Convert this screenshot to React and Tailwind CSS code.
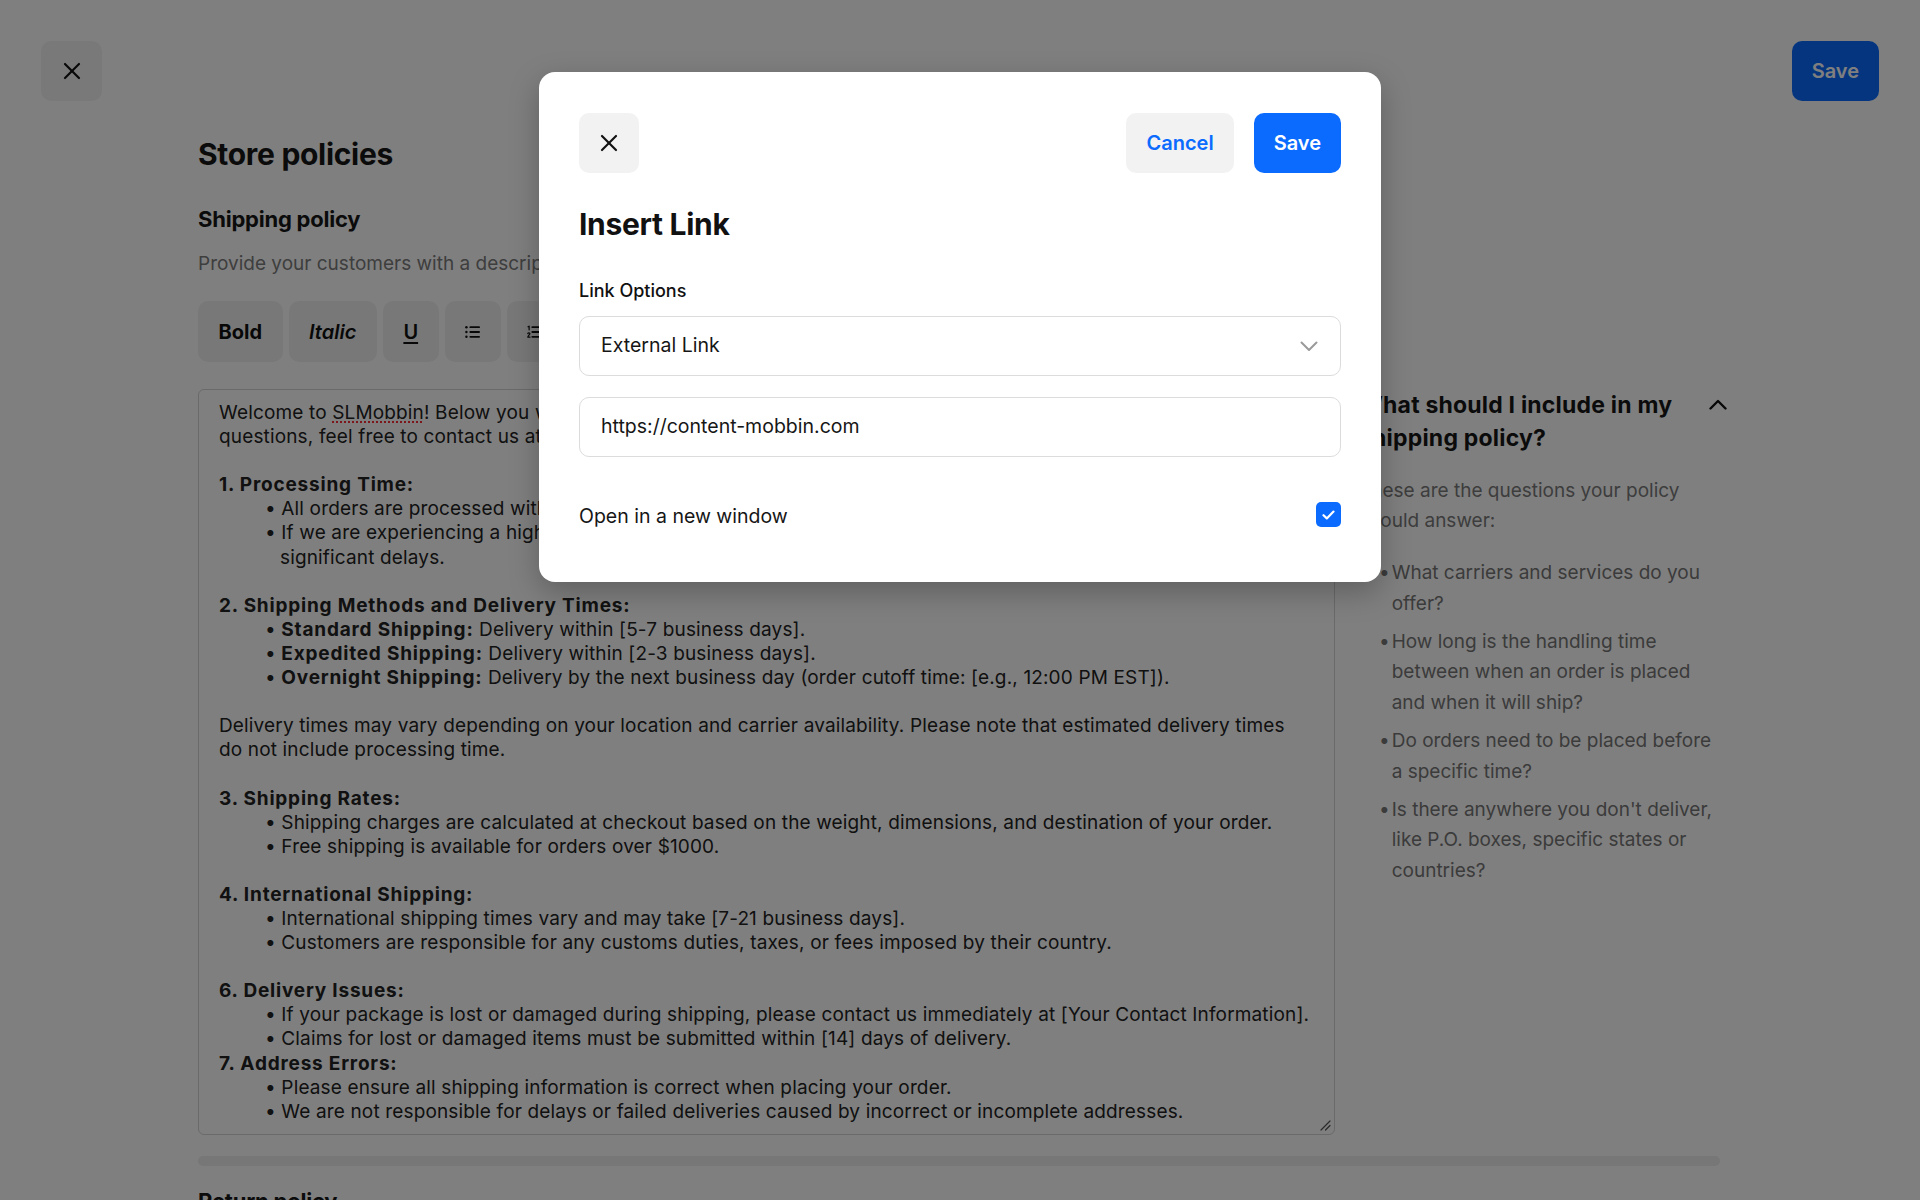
import React from "react";

const XIcon = ({ size = 18 }) => (
  <svg width={size} height={size} viewBox="0 0 18 18" fill="none" stroke="#111" strokeWidth="2.2" strokeLinecap="round">
    <line x1="2" y1="2" x2="16" y2="16" />
    <line x1="16" y1="2" x2="2" y2="16" />
  </svg>
);

const BulletListIcon = () => (
  <svg width="18" height="16" viewBox="0 0 17 15" fill="none">
    <circle cx="1.6" cy="2" r="1.4" fill="#111" />
    <circle cx="1.6" cy="7.5" r="1.4" fill="#111" />
    <circle cx="1.6" cy="13" r="1.4" fill="#111" />
    <g stroke="#111" strokeWidth="2" strokeLinecap="round">
      <line x1="6" y1="2" x2="16" y2="2" />
      <line x1="6" y1="7.5" x2="16" y2="7.5" />
      <line x1="6" y1="13" x2="16" y2="13" />
    </g>
  </svg>
);

const NumberListIcon = () => (
  <svg width="18" height="16" viewBox="0 0 17 15" fill="none">
    <g stroke="#111" strokeWidth="1.4" strokeLinecap="round" strokeLinejoin="round">
      <path d="M1.2 1.6 L2.4 0.9 V5" />
      <path d="M0.9 9.2 C1.4 8.2 3.4 8.3 3.2 9.6 C3.1 10.4 1.2 11.6 0.9 13.4 H3.4" />
    </g>
    <g stroke="#111" strokeWidth="2" strokeLinecap="round">
      <line x1="6" y1="2" x2="16" y2="2" />
      <line x1="6" y1="7.5" x2="16" y2="7.5" />
      <line x1="6" y1="13" x2="16" y2="13" />
    </g>
  </svg>
);

const LinkIcon = () => (
  <svg width="18" height="18" viewBox="0 0 24 24" fill="none" stroke="#111" strokeWidth="2.2" strokeLinecap="round" strokeLinejoin="round">
    <path d="M10 13a5 5 0 0 0 7.54.54l3-3a5 5 0 0 0-7.07-7.07l-1.72 1.71" />
    <path d="M14 11a5 5 0 0 0-7.54-.54l-3 3a5 5 0 0 0 7.07 7.07l1.71-1.71" />
  </svg>
);

const ChevronUp = () => (
  <svg width="18" height="11" viewBox="0 0 18 11" fill="none" stroke="#111" strokeWidth="2.4" strokeLinecap="round" strokeLinejoin="round">
    <path d="M1.5 9.5 L9 2 L16.5 9.5" />
  </svg>
);

const ChevronDown = () => (
  <svg width="18" height="11" viewBox="0 0 18 11" fill="none" stroke="#9a9a9a" strokeWidth="2" strokeLinecap="round" strokeLinejoin="round">
    <path d="M1.5 1.5 L9 9 L16.5 1.5" />
  </svg>
);

const Line = ({ children, indent = 0 }) => (
  <div className="h-[24.1px] whitespace-pre" style={indent ? { paddingLeft: indent } : undefined}>
    {children}
  </div>
);

const Blank = () => <div className="h-[24.1px]" />;

const B = ({ children }) => <span className="font-bold tracking-[0.8px]">{children}</span>;

const Li = ({ children }) => <Line indent={46}>• {children}</Line>;

const ToolBtn = ({ children, className = "" }) => (
  <button className={`flex h-[61px] items-center justify-center rounded-[10px] bg-[#f1f1f1] px-[20.5px] text-[20px] text-[#111] ${className}`}>
    {children}
  </button>
);

const helpItems = [
  "What carriers and services do you offer?",
  "How long is the handling time between when an order is placed and when it will ship?",
  "Do orders need to be placed before a specific time?",
  "Is there anywhere you don't deliver, like P.O. boxes, specific states or countries?",
];

export default function App() {
  return (
    <div className="relative h-[1200px] w-full overflow-hidden bg-white font-['Inter',_sans-serif] text-[#161616]">
      {/* Top bar */}
      <div className="flex items-center justify-between px-[41px] pt-[41px]">
        <button className="flex h-[60px] w-[61px] items-center justify-center rounded-[10px] bg-[#f3f3f3]">
          <XIcon />
        </button>
        <button className="h-[60px] rounded-[10px] bg-[#0b6bff] px-[20px] text-[20px] font-semibold text-white">
          Save
        </button>
      </div>

      {/* Main */}
      <main className="ml-[198px] w-[1522px]">
        <h1 className="mt-[35px] text-[30px] font-bold leading-[36px] tracking-[-0.01em]">Store policies</h1>
        <h2 className="mt-[33px] text-[22px] font-bold leading-[28px] tracking-[-0.01em]">Shipping policy</h2>
        <p className="mt-[19px] text-[19px] leading-[24px] text-[#7c7c7c]">
          Provide your customers with a description of your shipping policy and delivery times.
        </p>

        <div className="mt-[25px] flex gap-[6px]">
          <ToolBtn className="font-bold">Bold</ToolBtn>
          <ToolBtn className="font-semibold italic">Italic</ToolBtn>
          <ToolBtn className="font-semibold underline underline-offset-[3px]">U</ToolBtn>
          <ToolBtn className="w-[56px] px-0">
            <BulletListIcon />
          </ToolBtn>
          <ToolBtn className="w-[56px] px-0">
            <NumberListIcon />
          </ToolBtn>
          <ToolBtn className="w-[56px] px-0">
            <LinkIcon />
          </ToolBtn>
        </div>

        <div className="mt-[27px] grid grid-cols-[1137px_1fr] gap-[24px]">
          {/* Editor */}
          <div className="relative h-[746px] overflow-hidden rounded-[6px] border border-[#d4d4d4] px-[20px] pt-[11px] text-[19px] leading-[24px] tracking-[0.15px] text-[#222]">
            <Line>
              Welcome to{" "}
              <span className="underline decoration-red-500 decoration-dotted underline-offset-[3px]">SLMobbin</span>! Below
              you will find important information about our shipping policy. If you have
            </Line>
            <Line>questions, feel free to contact us at support@slmobbin.com.</Line>
            <Blank />
            <Line>
              <B>1. Processing Time:</B>
            </Line>
            <Li>All orders are processed within [1-2] business days (excluding weekends).</Li>
            <Li>If we are experiencing a high volume of orders, shipments may be delayed. We will</Li>
            <Line indent={61}>significant delays.</Line>
            <Blank />
            <Line>
              <B>2. Shipping Methods and Delivery Times:</B>
            </Line>
            <Li>
              <B>Standard Shipping:</B> Delivery within [5-7 business days].
            </Li>
            <Li>
              <B>Expedited Shipping:</B> Delivery within [2-3 business days].
            </Li>
            <Li>
              <B>Overnight Shipping:</B> Delivery by the next business day (order cutoff time: [e.g., 12:00 PM EST]).
            </Li>
            <Blank />
            <Line>
              Delivery times may vary depending on your location and carrier availability. Please note that estimated delivery times
            </Line>
            <Line>do not include processing time.</Line>
            <Blank />
            <Line>
              <B>3. Shipping Rates:</B>
            </Line>
            <Li>Shipping charges are calculated at checkout based on the weight, dimensions, and destination of your order.</Li>
            <Li>Free shipping is available for orders over $1000.</Li>
            <Blank />
            <Line>
              <B>4. International Shipping:</B>
            </Line>
            <Li>International shipping times vary and may take [7-21 business days].</Li>
            <Li>Customers are responsible for any customs duties, taxes, or fees imposed by their country.</Li>
            <Blank />
            <Line>
              <B>6. Delivery Issues:</B>
            </Line>
            <Li>If your package is lost or damaged during shipping, please contact us immediately at [Your Contact Information].</Li>
            <Li>Claims for lost or damaged items must be submitted within [14] days of delivery.</Li>
            <Line>
              <B>7. Address Errors:</B>
            </Line>
            <Li>Please ensure all shipping information is correct when placing your order.</Li>
            <Li>We are not responsible for delays or failed deliveries caused by incorrect or incomplete addresses.</Li>

            <svg
              className="absolute bottom-[3px] right-[3px]"
              width="11"
              height="11"
              viewBox="0 0 11 11"
              fill="none"
              stroke="#555"
              strokeWidth="1.2"
              strokeLinecap="round"
            >
              <line x1="1" y1="10" x2="10" y2="1" />
              <line x1="5.5" y1="10" x2="10" y2="5.5" />
            </svg>
          </div>

          {/* Help panel */}
          <aside>
            <div className="flex items-start justify-between">
              <h3 className="w-[335px] text-[23px] font-bold leading-[33px] tracking-[0.2px] text-[#161616]">
                What should I include in my shipping policy?
              </h3>
              <div className="mt-[10px]">
                <ChevronUp />
              </div>
            </div>
            <p className="mt-[21px] w-[340px] text-[19px] leading-[30px] text-[#7a7a7a]">
              These are the questions your policy should answer:
            </p>
            <ul className="mt-[22px] flex flex-col gap-[7.5px] pl-[20px] text-[19px] leading-[30.6px] text-[#777]">
              {helpItems.map((t) => (
                <li key={t} className="flex gap-[2px]">
                  <span>•</span>
                  <span className="w-[335px]">{t}</span>
                </li>
              ))}
            </ul>
          </aside>
        </div>

        <div className="mt-[21px] h-[10px] rounded-full bg-[#eeeeee]" />
        <h2 className="mt-[21px] text-[22px] font-bold leading-[28px] tracking-[-0.01em]">Return policy</h2>
      </main>

      {/* Overlay with modal */}
      <div className="absolute inset-0 flex items-start justify-center bg-[rgba(0,0,0,0.5)] pt-[72px]">
        <div className="w-[842px] rounded-[16px] bg-white px-[40px] pb-[53px] pt-[41px] shadow-[0_10px_30px_rgba(0,0,0,0.25)]">
          <div className="flex items-center justify-between">
            <button className="flex h-[60px] w-[60px] items-center justify-center rounded-[10px] bg-[#f2f2f2]">
              <XIcon />
            </button>
            <div className="flex gap-[20px]">
              <button className="h-[60px] rounded-[10px] bg-[#f2f2f2] px-[20px] text-[20px] font-semibold text-[#0b6bff]">
                Cancel
              </button>
              <button className="h-[60px] rounded-[10px] bg-[#0b6bff] px-[20px] text-[20px] font-semibold text-white">
                Save
              </button>
            </div>
          </div>

          <h2 className="mt-[33px] text-[30px] font-bold leading-[36px] tracking-[-0.01em] text-[#111]">Insert Link</h2>

          <div className="mt-[37px] text-[18px] font-medium leading-[24px] text-[#111]">Link Options</div>

          <div className="mt-[13px] flex h-[60px] items-center justify-between rounded-[10px] border border-[#dcdcdc] pl-[21px] pr-[22px]">
            <span className="text-[19.5px] text-[#161616]">External Link</span>
            <ChevronDown />
          </div>

          <div className="mt-[21px] flex h-[60px] items-center rounded-[10px] border border-[#dcdcdc] pl-[21px]">
            <span className="text-[19.5px] text-[#161616]">https://content-mobbin.com</span>
          </div>

          <div className="mt-[48px] flex h-[24px] items-center justify-between">
            <span className="text-[19.5px] text-[#161616]">Open in a new window</span>
            <span className="mb-[5px] flex h-[25px] w-[25px] items-center justify-center rounded-[5px] bg-[#0b6bff]">
              <svg width="13" height="10" viewBox="0 0 13 10" fill="none" stroke="white" strokeWidth="2.2" strokeLinecap="round" strokeLinejoin="round">
                <path d="M1.5 5.2 L4.8 8.4 L11.5 1.6" />
              </svg>
            </span>
          </div>
        </div>
      </div>
    </div>
  );
}
